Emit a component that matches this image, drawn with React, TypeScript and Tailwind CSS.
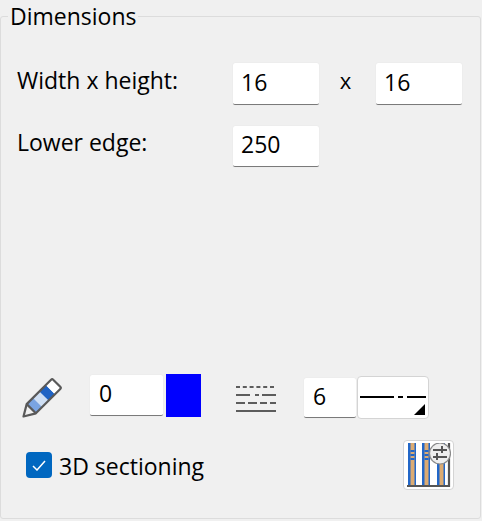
const font = "font-['Open_Sans','Noto_Sans',sans-serif]"

function ValueBox({ value, className }: { value: string; className: string }) {
  return (
    <div className={`flex items-center bg-white border-b border-b-[#7a7a7a] rounded-[2px] shadow-[0_0_1px_#d8d8d8] pb-[3px] text-[23px] leading-none text-black ${className}`}>
      {value}
    </div>
  )
}

function PencilIcon() {
  return (
    <svg width="40" height="40" viewBox="0 0 40 40" className="shrink-0">
      <g transform="translate(1.5 38.5) rotate(45)">
        <rect x="-6.5" y="-20" width="13" height="9" fill="#7aa4e2" />
        <rect x="-6.5" y="-29" width="13" height="9" fill="#cfdff4" />
        <rect x="-6.5" y="-38" width="13" height="9" fill="#1f63c4" />
        <rect x="-6.5" y="-47" width="13" height="9" fill="#ffffff" />
        <path d="M-5 -47h10a1.5 1.5 0 0 1 1.5 1.5V-11L0 0L-6.5 -11V-45.5A1.5 1.5 0 0 1 -5 -47Z" fill="none" stroke="#595959" strokeWidth="2.2" strokeLinejoin="round" />
        <path d="M-6.5 -11h13" stroke="#595959" strokeWidth="2.2" />
      </g>
    </svg>
  )
}

function LineTypesIcon() {
  return (
    <svg width="41" height="26" viewBox="0 0 41 26" className="shrink-0" stroke="#5c5c5c" fill="none">
      <path d="M0 1h40" strokeWidth="2.2" strokeDasharray="4 2.8" />
      <path d="M0 9h14M19 9h4M26 9h14" strokeWidth="2.2" />
      <path d="M0 17h9M12 17h9M24 17h7M34 17h6" strokeWidth="2.2" />
      <path d="M0 25h40" strokeWidth="2.2" />
    </svg>
  )
}

function SectionIcon() {
  return (
    <svg width="44" height="45" viewBox="0 0 44 45">
      {[1, 15, 30].map((x, i) => (
        <g key={x}>
          <rect x={x} y="0" width="8" height="42" fill="#2267c8" />
          <rect x={x + 2.5} y="0" width="4" height="42" fill="#dcab72" />
          {i < 2 && <path d={`M${x + 4.5} 7v12`} stroke="#2267c8" strokeWidth="4" strokeDasharray="2 2" />}
        </g>
      ))}
      <path d="M0 43h43M42 0v44" stroke="#555555" strokeWidth="2.2" fill="none" />
      <circle cx="33" cy="10.5" r="10.5" fill="#eeeeee" stroke="#8a8a8a" strokeWidth="1.2" />
      <path d="M26 7h14M26 14h14" stroke="#555555" strokeWidth="2" />
      <path d="M35 3v7M30 10v7" stroke="#555555" strokeWidth="2" />
    </svg>
  )
}

export default function App() {
  return (
    <div className={`w-[482px] h-[521px] bg-[#f0f0f0] overflow-hidden text-black ${font}`}>
      <fieldset className="flex flex-col w-[481px] h-[519px] border border-[#dcdcdc] rounded-[3px] pl-[16px] pr-[18px] pb-[28px]">
        <legend className="-ml-[9px] px-[2px] text-[23px] leading-[32px]">Dimensions</legend>

        <div className="flex items-start mt-[31px] h-[42px]">
          <span className="w-[216px] text-[23px] leading-[34px]">Width x height:</span>
          <ValueBox value="16" className="w-[86px] h-[42px] pl-[8px]" />
          <span className="w-[57px] pr-[4px] text-center text-[22px] leading-[34px]">x</span>
          <ValueBox value="16" className="w-[86px] h-[42px] pl-[8px]" />
        </div>

        <div className="flex items-start mt-[21px] h-[41px]">
          <span className="w-[216px] text-[23px] leading-[32px]">Lower edge:</span>
          <ValueBox value="250" className="w-[86px] h-[41px] pl-[8px]" />
        </div>

        <div className="flex items-start mt-auto h-[45px]">
          <div className="ml-[5px] mt-[4px] w-[40px]"><PencilIcon /></div>
          <ValueBox value="0" className="ml-[28px] mt-[1px] w-[73px] h-[41px] pl-[9px]" />
          <div className="ml-[3px] w-[35px] h-[43px] bg-[#0000ff]" />
          <div className="ml-[35px] mt-[12px]"><LineTypesIcon /></div>
          <ValueBox value="6" className="ml-[27px] mt-[4px] w-[52px] h-[40px] pl-[9px]" />
          <div className="ml-[1px] mt-[2px] relative w-[72px] h-[43px] bg-white rounded-[4px] border border-[#d4d4d4]">
            <svg width="70" height="41" viewBox="0 0 70 41" className="absolute left-0 top-0">
              <path d="M2 20h34M40 20h5M49 20h19" stroke="#000000" strokeWidth="2" fill="none" />
              <path d="M67 27v11H56Z" fill="#000000" />
            </svg>
          </div>
        </div>

        <div className="flex items-center mt-[21px] h-[50px]">
          <div className="ml-[9px] flex h-[26px] w-[26px] items-center justify-center rounded-[4px] bg-[#0067c0]">
            <svg width="14" height="11" viewBox="0 0 14 11" fill="none" stroke="#ffffff" strokeWidth="1.5">
              <path d="M1 6l4 4 8-9" />
            </svg>
          </div>
          <span className="ml-[7px] mt-[3px] text-[23px] leading-none">3D sectioning</span>
          <div className="ml-auto mr-[8px] flex h-[50px] w-[51px] items-center justify-center rounded-[4px] bg-white border border-[#d4d4d4]">
            <SectionIcon />
          </div>
        </div>
      </fieldset>
    </div>
  )
}
